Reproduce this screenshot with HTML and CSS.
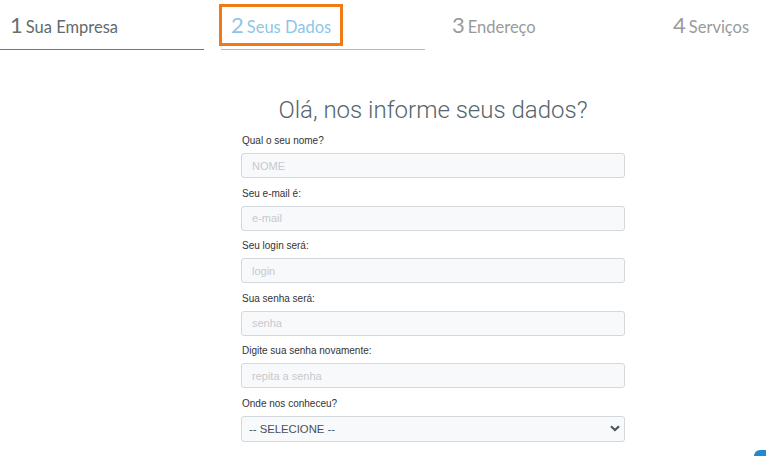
FILE: index.html
```
<!DOCTYPE html>
<html lang="pt-BR">
<head>
<meta charset="utf-8">
<title>Cadastro - Seus Dados</title>
<link rel="stylesheet" href="styles.css">
</head>
<body>
<nav class="steps">
  <div class="step done"><a class="step-link"><span class="num">1</span> <span class="txt">Sua Empresa</span></a></div>
  <div class="step active"><a class="step-link focus"><span class="num">2</span> <span class="txt">Seus Dados</span></a></div>
  <div class="step todo"><a class="step-link"><span class="num">3</span> <span class="txt">Endereço</span></a></div>
  <div class="step todo"><a class="step-link"><span class="num">4</span> <span class="txt">Serviços</span></a></div>
</nav>
<main class="form">
  <h1 class="title">Olá, nos informe seus dados?</h1>
  <div class="field"><label>Qual o seu nome?</label><input class="control" placeholder="NOME"></div>
  <div class="field"><label>Seu e-mail é:</label><input class="control" placeholder="e-mail"></div>
  <div class="field"><label>Seu login será:</label><input class="control" placeholder="login"></div>
  <div class="field"><label>Sua senha será:</label><input class="control" placeholder="senha"></div>
  <div class="field"><label>Digite sua senha novamente:</label><input class="control" placeholder="repita a senha"></div>
  <div class="field"><label>Onde nos conheceu?</label>
    <div class="select-wrap">
      <select class="control select"><option>-- SELECIONE --</option></select>
      <svg class="chev" width="10" height="7" viewBox="0 0 10 7"><path d="M1 1.2 L5 5 L9 1.2" fill="none" stroke="#4b5660" stroke-width="2.2"/></svg>
    </div>
  </div>
</main>
<div class="chat"></div>
</body>
</html>
```
FILE: styles.css
```
html, body { margin: 0; padding: 0; background: #fff; }
body { font-family: "Liberation Sans", Arial, sans-serif; overflow: hidden; width: 766px; height: 456px; position: relative; }

.steps { display: flex; gap: 17px; overflow: hidden; padding-top: 1px; margin-top: -1px; }
.step {
  width: 204px; flex: 0 0 204px; box-sizing: border-box; height: 50px;
  padding: 7px 0 0 1px; border-bottom: 1px solid transparent;
}
.step.done { border-bottom-color: #6f7b77; }
.step.active { border-bottom-color: #8cc3e2; }
.step-link {
  display: inline-flex; align-items: baseline; height: 36px; box-sizing: border-box;
  padding: 6px 9px 0 9px; font-family: Lato, "Open Sans", sans-serif; text-decoration: none;
}
.step-link.focus { outline: 3.5px solid #f27a16; outline-offset: 0; }
.num { font-size: 22px; line-height: 24px; margin-right: 3px; }
.txt { font-size: 16.5px; line-height: 24px; }
.done .num { color: #6e6e6e; }
.done .txt { color: #5f6b6d; }
.active .num, .active .txt { color: #8ec6e6; }
.todo .num, .todo .txt { color: #9a9a9a; }

.form { width: 384px; margin: 46px 0 0 241px; }
.title {
  margin: 0 0 10px; text-align: center; font-family: Roboto, sans-serif;
  font-weight: 300; font-size: 24px; line-height: 29px; color: #56656e;
}
.field { margin-bottom: 9.5px; }
.field label { display: block; font-size: 10px; line-height: 12px; color: #333; margin: 0 0 6px 1px; }
.control {
  display: block; width: 100%; height: 25px; box-sizing: border-box; margin: 0;
  border: 1px solid #d3d8dc; border-radius: 3px; background: #f8f9fa;
  padding: 0 10px; font-family: "Liberation Sans", Arial, sans-serif; font-size: 11px; color: #495057;
}
.control::placeholder { color: #c5cacf; }
.select-wrap { position: relative; }
.select { appearance: none; -webkit-appearance: none; height: 26px; padding-left: 7px; font-size: 11.3px; }
.chev { position: absolute; right: 5px; top: 9px; }

.chat {
  position: absolute; left: 754px; top: 450px; width: 12px; height: 6px;
  background: #2389cf; border-radius: 6px 0 0 0;
}
```
